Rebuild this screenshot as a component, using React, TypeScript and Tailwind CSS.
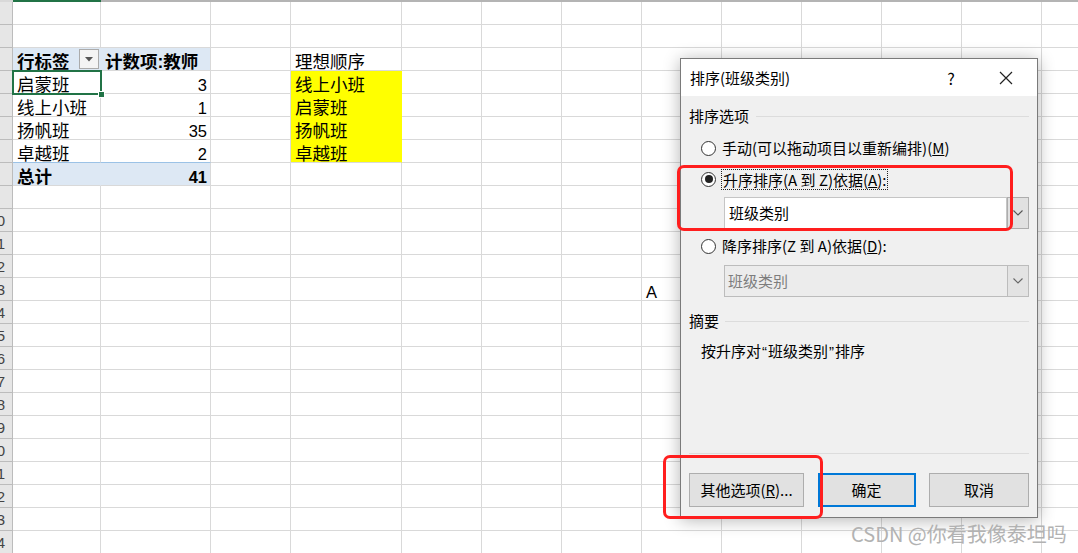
import React from "react";

const COLS =
  "grid grid-cols-[13px_88px_110px_80px_111px_80px_80px_80px_80px_80px_80px_80px_80px_1fr]";
const SHEET_FONT = "font-['Liberation_Sans','Noto_Sans_CJK_SC',sans-serif]";
const UI_FONT = "font-['Noto_Sans_CJK_SC',sans-serif]";

type CellDef = {
  text?: string;
  bold?: boolean;
  right?: boolean;
  num?: boolean;
  cls?: string;
  dropdown?: boolean;
};

// content of the visible part of the sheet, keyed by "row-col" (col 1 = A)
const cells: Record<string, CellDef> = {
  "3-1": { text: "行标签", bold: true, cls: "bg-[#dde8f4] border-r-[#dde8f4]", dropdown: true },
  "3-2": { text: "计数项:教师", bold: true, cls: "bg-[#dde8f4]" },
  "3-4": { text: "理想顺序" },
  "4-1": { text: "启蒙班" },
  "4-2": { text: "3", right: true, num: true },
  "4-4": { text: "线上小班", cls: "bg-[#ffff00] border-b-[#ffff00] border-r-[#ffff00]" },
  "5-1": { text: "线上小班" },
  "5-2": { text: "1", right: true, num: true },
  "5-4": { text: "启蒙班", cls: "bg-[#ffff00] border-b-[#ffff00] border-r-[#ffff00]" },
  "6-1": { text: "扬帆班" },
  "6-2": { text: "35", right: true, num: true },
  "6-4": { text: "扬帆班", cls: "bg-[#ffff00] border-b-[#ffff00] border-r-[#ffff00]" },
  "7-1": { text: "卓越班", cls: "border-b-[#9bc2e6]" },
  "7-2": { text: "2", right: true, num: true, cls: "border-b-[#9bc2e6]" },
  "7-4": { text: "卓越班", cls: "bg-[#ffff00] border-r-[#ffff00]" },
  "8-1": { text: "总计", bold: true, cls: "bg-[#dde8f4] border-r-[#dde8f4]" },
  "8-2": { text: "41", bold: true, right: true, num: true, cls: "bg-[#dde8f4]" },
  "13-8": { text: "A", num: true },
};

function Sheet() {
  const rows = Array.from({ length: 24 }, (_, i) => i + 1);
  // columns A..L, the partly visible M is the trailing 1fr cell
  const cols = Array.from({ length: 12 }, (_, i) => i + 1);
  return (
    <div className={SHEET_FONT}>
      {/* bottom edge of the column header */}
      <div className="flex h-[2px] bg-[#b4b4b4]">
        <div className="w-[13px] bg-[#d9d9d9]" />
        <div className="w-[88px] bg-[#217346]" />
      </div>
      {rows.map((r) => (
        <div key={r} className={`${COLS} h-[23px]`}>
          <div className="flex items-end justify-end overflow-hidden border-r border-b border-[#bcbcbc] bg-[#e6e6e6] pb-[1px] pr-[7px] text-[15px] leading-[18px] text-[#444]">
            {r >= 10 ? <span className="whitespace-nowrap">{r}</span> : null}
          </div>
          {cols.map((c) => {
            const d = cells[`${r}-${c}`];
            return (
              <div
                key={c}
                className={`relative flex items-end overflow-visible whitespace-nowrap border-r border-b border-[#d9d9d9] ${
                  d?.right ? "justify-end pr-[3px]" : "pl-[4px]"
                } ${d?.num ? "text-[16.5px]" : "text-[17.5px]"} ${d?.bold ? "font-bold" : ""} leading-[15px] text-black ${d?.cls ?? ""}`}
              >
                {d?.text}
                {d?.dropdown && (
                  <span className="absolute right-[1px] top-[1px] flex h-[20px] w-[20px] items-center justify-center border border-[#ababab] bg-[#f4f4f4]">
                    <svg width="8" height="5" viewBox="0 0 8 5">
                      <path d="M0 0 L8 0 L4 4.5 Z" fill="#555" />
                    </svg>
                  </span>
                )}
              </div>
            );
          })}
          <div className="border-b border-[#d9d9d9]" />
        </div>
      ))}
      {/* active cell A4 */}
      <div className="absolute left-[12px] top-[70px] h-[25px] w-[90px] border-2 border-[#217346]" />
      <div className="absolute left-[98px] top-[91px] h-[7px] w-[7px] border border-white bg-[#217346]" />
    </div>
  );
}

function Radio({ checked }: { checked?: boolean }) {
  return (
    <span className="flex h-[15px] w-[15px] shrink-0 items-center justify-center rounded-full border border-[#333] bg-white">
      {checked && <span className="h-[8px] w-[8px] rounded-full bg-[#222]" />}
    </span>
  );
}

function Chevron({ color = "#555" }: { color?: string }) {
  return (
    <svg width="10" height="6" viewBox="0 0 10 6">
      <path d="M0.5 0.5 L5 5 L9.5 0.5" fill="none" stroke={color} strokeWidth="1.1" />
    </svg>
  );
}

function SortDialog() {
  return (
    <div
      className={`absolute left-[680px] top-[58px] flex h-[460px] w-[358px] flex-col border border-[#7a7a7a] bg-[#f0f0f0] text-[15px] leading-[20px] text-black shadow-[0_2px_16px_rgba(0,0,0,0.3)] ${UI_FONT}`}
    >
      <div className="flex h-[37px] shrink-0 items-center bg-white pl-[9px]">
        <span>排序(班级类别)</span>
        <div className="ml-auto mr-[8px] flex gap-[9px]">
          <span className="flex h-[30px] w-[46px] items-center justify-center text-[16px]">?</span>
          <span className="flex h-[30px] w-[46px] items-center justify-center">
            <svg width="14" height="14" viewBox="0 0 14 14">
              <path d="M1 1 L13 13 M13 1 L1 13" stroke="#222" strokeWidth="1.2" />
            </svg>
          </span>
        </div>
      </div>

      <div className="flex flex-1 flex-col px-[8px] pb-[10px] pt-[10px]">
        <div className="flex h-[20px] items-center">
          <span>排序选项</span>
          <div className="ml-[7px] h-px flex-1 bg-[#dcdcdc]" />
        </div>

        <div className="mt-[11px] flex h-[22px] items-center gap-[6px] pl-[12px]">
          <Radio />
          <span>
            手动(可以拖动项目以重新编排)(<span className="underline">M</span>)
          </span>
        </div>

        <div className="mt-[9px] flex h-[22px] items-center gap-[5px] pl-[12px]">
          <Radio checked />
          <span className="border border-dotted border-[#222] px-[1px] leading-[19px]">
            升序排序(A 到 Z)依据(<span className="underline">A</span>):
          </span>
        </div>

        <div className="ml-[35px] mt-[7px] flex h-[32px]">
          <div className="flex flex-1 items-center border border-[#c5c5c5] bg-white pl-[4px]">班级类别</div>
          <div className="flex w-[22px] items-center justify-center border border-[#adadad] bg-[#e1e1e1]">
            <Chevron />
          </div>
        </div>

        <div className="mt-[6px] flex h-[22px] items-center gap-[6px] pl-[12px]">
          <Radio />
          <span>
            降序排序(Z 到 A)依据(<span className="underline">D</span>):
          </span>
        </div>

        <div className="ml-[35px] mt-[8px] flex h-[32px] border border-[#bcbcbc] bg-[#ececec] text-[#7d7d7d]">
          <div className="flex flex-1 items-center pl-[3px]">班级类别</div>
          <div className="flex w-[21px] items-center justify-center border-l border-[#bcbcbc] bg-[#e3e3e3]">
            <Chevron color="#666" />
          </div>
        </div>

        <div className="mt-[14px] flex h-[20px] items-center">
          <span>摘要</span>
          <div className="ml-[6px] h-px flex-1 bg-[#dcdcdc]" />
        </div>

        <div className="mt-[10px] h-[20px] pl-[12px]">
          按升序对<span className="mx-[1px] font-['Liberation_Sans',sans-serif]">“</span>班级类别
          <span className="mx-[1px] font-['Liberation_Sans',sans-serif]">”</span>排序
        </div>

        <div className="flex-1" />
        <div className="h-px bg-[#dcdcdc]" />

        <div className="mt-[19px] flex h-[34px] justify-between">
          <button className="flex w-[115px] items-center justify-center border border-[#adadad] bg-[#e1e1e1]">
            其他选项(<span className="underline">R</span>)...
          </button>
          <button className="flex w-[98px] items-center justify-center border-2 border-[#0078d7] bg-[#e1e1e1]">
            确定
          </button>
          <button className="flex w-[100px] items-center justify-center border border-[#adadad] bg-[#e1e1e1]">
            取消
          </button>
        </div>
      </div>
    </div>
  );
}

export default function App() {
  return (
    <div className="relative h-[553px] w-[1078px] overflow-hidden bg-white">
      <Sheet />
      <SortDialog />

      {/* red annotation boxes */}
      <div className="absolute left-[677px] top-[165px] h-[66px] w-[336px] rounded-[7px] border-[3px] border-[#ff1e1e]" />
      <div className="absolute left-[663px] top-[455px] h-[64px] w-[160px] rounded-[7px] border-[3px] border-[#ff1e1e]" />

      <div className={`absolute left-[851px] top-[522px] text-[20px] leading-[24px] text-[#b2b2b2] ${UI_FONT}`}>
        CSDN @你看我像泰坦吗
      </div>
    </div>
  );
}
